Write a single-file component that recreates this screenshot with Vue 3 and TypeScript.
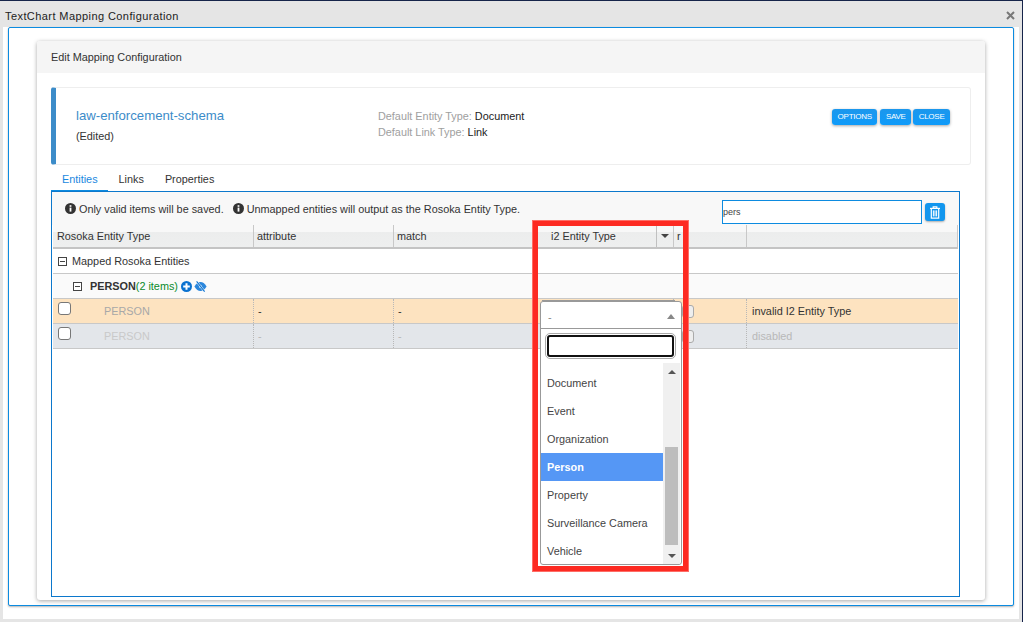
<script setup lang="ts">
interface EntityRow {
  name: string;
  attribute: string;
  match: string;
  status: string;
  tone: string;
}

interface ColumnDef {
  label: string;
  sortable?: boolean;
}

const columns: ColumnDef[] = [
  { label: 'Rosoka Entity Type' },
  { label: 'attribute' },
  { label: 'match' },
  { label: 'i2 Entity Type', sortable: true },
  { label: 'r' },
  { label: '' },
];

const rows: EntityRow[] = [
  { name: 'PERSON', attribute: '-', match: '-', status: 'invalid I2 Entity Type', tone: 'invalid' },
  { name: 'PERSON', attribute: '-', match: '-', status: 'disabled', tone: 'disabled' },
];

const options: string[] = ['Document', 'Event', 'Organization', 'Person', 'Property', 'Surveillance Camera', 'Vehicle'];
const tabs: string[] = ['Entities', 'Links', 'Properties'];
</script>

<template>
  <div class="window">
    <div class="titlebar">
      <span class="window-title">TextChart Mapping Configuration</span>
      <svg class="close-x" width="9" height="9" viewBox="0 0 9 9"><path d="M1 1l7 7M8 1l-7 7" stroke="#777" stroke-width="2" /></svg>
    </div>
    <div class="window-body">
      <div class="blue-panel">
        <div class="card">
          <div class="card-head">Edit Mapping Configuration</div>
          <div class="card-body">
            <div class="info-box">
              <div class="schema">
                <div class="schema-name">law-enforcement-schema</div>
                <div class="schema-state">(Edited)</div>
              </div>
              <div class="defaults">
                <div><span class="muted">Default Entity Type:</span> Document</div>
                <div><span class="muted">Default Link Type:</span> Link</div>
              </div>
              <div class="actions">
                <button class="btn">OPTIONS</button>
                <button class="btn">SAVE</button>
                <button class="btn">CLOSE</button>
              </div>
            </div>

            <div class="tabs">
              <div v-for="(tab, i) in tabs" :key="tab" class="tab" :class="{ 'tab--active': i === 0 }">{{ tab }}</div>
            </div>

            <div class="tab-panel">
              <div class="toolbar">
                <svg class="info-icon" width="11" height="11" viewBox="0 0 11 11"><circle cx="5.5" cy="5.5" r="5.5" fill="#333" /><rect x="4.6" y="4.6" width="1.8" height="4" fill="#fff" /><rect x="4.6" y="2.2" width="1.8" height="1.6" fill="#fff" /></svg>
                <span class="note">Only valid items will be saved.</span>
                <svg class="info-icon info-icon--second" width="11" height="11" viewBox="0 0 11 11"><circle cx="5.5" cy="5.5" r="5.5" fill="#333" /><rect x="4.6" y="4.6" width="1.8" height="4" fill="#fff" /><rect x="4.6" y="2.2" width="1.8" height="1.6" fill="#fff" /></svg>
                <span class="note">Unmapped entities will output as the Rosoka Entity Type.</span>
                <input class="search" value="pers" />
                <button class="trash">
                  <svg width="10" height="13" viewBox="0 0 10 13" fill="none" stroke="#fff" stroke-width="1.2"><path d="M0 2.4h10" /><path d="M3.2 2.2V0.8h3.6v1.4" /><path d="M1.3 2.6v9.6h7.4V2.6" /><path d="M3.4 4.4v6M5 4.4v6M6.6 4.4v6" stroke-width="1" /></svg>
                </button>
              </div>

              <div class="grid-head">
                <div v-for="col in columns" :key="col.label" class="head-cell" :class="{ 'head-cell--sort': col.sortable }">
                  <span class="head-label">{{ col.label }}</span>
                  <span v-if="col.sortable" class="sort-btn"><i class="caret-down"></i></span>
                </div>
              </div>

              <div class="group-row">
                <span class="toggle"></span>
                <span>Mapped Rosoka Entities</span>
              </div>
              <div class="group-row group-row--sub">
                <span class="toggle"></span>
                <b class="group-name">PERSON</b><span class="group-count">(2 items)</span>
                <svg class="mini-icon" width="11" height="11" viewBox="0 0 11 11"><circle cx="5.5" cy="5.5" r="5.5" fill="#0b72d0" /><path d="M5.5 2.2v6.6M2.2 5.5h6.6" stroke="#fff" stroke-width="2" /></svg>
                <svg class="mini-icon" width="13" height="11" viewBox="0 0 13 11"><path d="M0.4 5.5C2.3 2.3 4.2 1 6.5 1s4.2 1.3 6.1 4.5c-1.9 3.2-3.8 4.5-6.1 4.5S2.3 8.7.4 5.5z" fill="#2a86dc" /><circle cx="6.5" cy="5.5" r="1.5" fill="#cfe4f8" /><path d="M2.6 0.3l8 10.4" stroke="#fff" stroke-width="1.9" /><path d="M2.6 0.3l8 10.4" stroke="#0b72d0" stroke-width="1.1" /></svg>
              </div>

              <div v-for="row in rows" :key="row.status" class="data-row" :class="`data-row--${row.tone}`">
                <div class="cell cell--name"><span class="check"></span><span class="entity">{{ row.name }}</span></div>
                <div class="cell">{{ row.attribute }}</div>
                <div class="cell">{{ row.match }}</div>
                <div class="cell"></div>
                <div class="cell cell--flag"><span class="mini-check"></span></div>
                <div class="cell">{{ row.status }}</div>
              </div>
            </div>
          </div>
        </div>
      </div>
    </div>

    <div class="dropdown">
      <div class="dropdown-value">
        <span>-</span>
        <i class="caret-up"></i>
      </div>
      <div class="dropdown-search"><input class="dropdown-input" /></div>
      <div class="dropdown-list">
        <div class="options">
          <div v-for="opt in options" :key="opt" class="option" :class="{ 'option--on': opt === 'Person' }">{{ opt }}</div>
        </div>
        <div class="scrollbar">
          <i class="caret-up caret-up--small"></i>
          <div class="scroll-track"><div class="scroll-thumb"></div></div>
          <i class="caret-down caret-down--small"></i>
        </div>
      </div>
    </div>

    <div class="highlight"></div>
  </div>
</template>

<style>
html,
body {
  margin: 0;
  background: #e5e5e5;
}
</style>

<style scoped>
.window {
  position: relative;
  display: flex;
  flex-direction: column;
  width: 1023px;
  height: 622px;
  box-sizing: border-box;
  overflow: hidden;
  background: #e5e5e5;
  border-top: 1px solid #16244a;
  border-right: 1px solid #16244a;
  font-family: "Liberation Sans", Arial, sans-serif;
  font-size: 10.85px;
  color: #333;
}

.titlebar {
  display: flex;
  align-items: center;
  justify-content: space-between;
  box-sizing: border-box;
  height: 26px;
  padding: 3px 7px 0 5px;
  flex: none;
}

.window-title {
  font-size: 11px;
  letter-spacing: 0.42px;
  color: #222;
}

.window-body {
  flex: 1;
  min-height: 0;
  margin: 0 3px 3px 3px;
  padding: 0 5px 13px 5px;
  background: #fff;
  display: flex;
}

.blue-panel {
  flex: 1;
  box-sizing: border-box;
  padding: 13px 28px 5px 28px;
  border: 1px solid #0c8be0;
  border-radius: 2px;
  box-shadow: 0 1px 2px rgba(0, 0, 0, 0.3);
  background: #fff;
  display: flex;
}

.card {
  flex: 1;
  display: flex;
  flex-direction: column;
  border-radius: 3px;
  box-shadow: 0 1px 4px rgba(0, 0, 0, 0.35);
  background: #fff;
}

.card-head {
  height: 32px;
  line-height: 32px;
  padding-left: 14px;
  background: #f5f5f5;
  border-radius: 3px 3px 0 0;
  flex: none;
}

.card-body {
  flex: 1;
  min-height: 0;
  display: flex;
  flex-direction: column;
  padding: 14px 14px 3px 14px;
}

.info-box {
  display: flex;
  flex: none;
  box-sizing: border-box;
  height: 78px;
  border: 1px solid #eee;
  border-left: 5px solid #3c8cc9;
  border-radius: 3px;
}

.schema {
  width: 322px;
  padding: 20px 0 0 20px;
  box-sizing: border-box;
}

.schema-name {
  font-size: 13.2px;
  color: #3c8cc9;
}

.schema-state {
  margin-top: 7px;
}

.defaults {
  flex: 1;
  padding-top: 20px;
  line-height: 16px;
  color: #222;
}

.muted {
  color: #a0a0a0;
}

.actions {
  display: flex;
  align-items: flex-start;
  padding: 21px 20px 0 0;
}

.btn {
  height: 16px;
  margin-left: 3px;
  padding: 0 5.5px;
  border: 0;
  border-radius: 3px;
  background: linear-gradient(#1c97ec, #0f9bfa);
  box-shadow: 0 1px 3px rgba(0, 0, 0, 0.35);
  color: #fff;
  font-family: inherit;
  font-size: 8px;
  letter-spacing: -0.25px;
  line-height: 16px;
}

.btn:last-child {
  margin-left: 2px;
}

.tabs {
  display: flex;
  flex: none;
  height: 26px;
}

.tab {
  display: flex;
  align-items: center;
  padding: 2px 10.5px 0;
  color: #333;
}

.tab--active {
  color: #1a88e0;
  box-sizing: border-box;
  height: 26px;
  padding-left: 11px;
  border-bottom: 1px solid #0c8be0;
}

.tab-panel {
  flex: 1;
  min-height: 0;
  margin-right: 11px;
  border: 1px solid #0c78cc;
  padding: 0 1px;
}

.toolbar {
  display: flex;
  align-items: center;
  height: 33px;
  padding: 0 14px 0 13px;
  background: #f8f8f8;
  margin: 0 -1px;
}

.info-icon {
  margin-right: 3px;
  flex: none;
}

.info-icon--second {
  margin-left: 9px;
}

.search {
  box-sizing: border-box;
  width: 200px;
  height: 24px;
  margin: 7px 3px 0 auto;
  padding: 0;
  border: 1px solid #0c8be0;
  outline: 0;
  font-family: inherit;
  font-size: 9px;
  color: #444;
}

.trash {
  display: flex;
  align-items: center;
  justify-content: center;
  width: 20px;
  height: 18px;
  margin-top: 7px;
  padding: 0;
  border: 0;
  border-radius: 3px;
  background: #1296ee;
  box-shadow: 0 1px 2px rgba(0, 0, 0, 0.3);
}

.grid-head,
.data-row {
  display: grid;
  grid-template-columns: 201px 140px 143px 137px 73px 211px;
}

.grid-head {
  height: 24px;
  box-sizing: border-box;
  border-bottom: 2px solid #c4c4c4;
  background: linear-gradient(#f8f8f8 0, #f8f8f8 30%, #eceded 30%, #eeefef 100%);
}

.head-cell {
  display: flex;
  align-items: center;
  justify-content: space-between;
  overflow: hidden;
  padding-left: 3px;
  border-right: 1px solid #c8c8c8;
  white-space: nowrap;
}

.head-cell:first-child {
  padding-left: 4px;
}

.head-cell--sort {
  padding-left: 14px;
}

.sort-btn {
  display: flex;
  align-items: center;
  justify-content: center;
  width: 16px;
  height: 100%;
  border-left: 1px solid #c0c0c0;
}

.caret-down,
.caret-up {
  display: block;
  width: 0;
  height: 0;
  border-left: 4px solid transparent;
  border-right: 4px solid transparent;
}

.caret-down {
  border-top: 4px solid #444;
}

.caret-up {
  border-bottom: 5px solid #888;
}

.caret-up--small {
  border-bottom: 4px solid #555;
}

.caret-down--small {
  border-top-color: #555;
}

.group-row {
  display: flex;
  align-items: center;
  box-sizing: border-box;
  height: 25px;
  padding-left: 5px;
  border-bottom: 1px solid #c8c8c8;
}

.group-row--sub {
  padding-left: 20px;
  background: #fafafa;
}

.toggle {
  position: relative;
  box-sizing: border-box;
  width: 9px;
  height: 9px;
  margin-right: 5px;
  border: 1px solid #444;
  background: #fff;
}

.toggle::after {
  content: "";
  position: absolute;
  left: 1px;
  right: 1px;
  top: 3px;
  height: 1px;
  background: #444;
}

.group-row--sub .toggle {
  margin-right: 8px;
}

.group-name {
  color: #333;
}

.group-count {
  color: #0a8a2a;
  margin-right: 3px;
}

.mini-icon {
  margin-right: 2px;
}

.data-row {
  height: 25px;
  box-sizing: border-box;
  border-bottom: 1px solid #c8c8c8;
}

.data-row--invalid {
  background: #fde3c0;
}

.data-row--disabled {
  background: #e3e6ea;
  color: #b8b8b8;
}

.cell {
  display: flex;
  align-items: center;
  padding-left: 4px;
  border-right: 1px dotted #b8b8b8;
}

.cell:last-child {
  padding-left: 5px;
  border-right: 0;
}

.cell--name {
  position: relative;
  padding-left: 51px;
}

.check {
  position: absolute;
  left: 5px;
  top: 3px;
  box-sizing: border-box;
  width: 13px;
  height: 13px;
  background: #fff;
  border: 1px solid #777;
  border-radius: 3px;
}

.entity {
  color: #a8a8a8;
}

.data-row--disabled .entity {
  color: #c9c9c9;
}

.cell--flag {
  padding-left: 0;
}

.mini-check {
  margin-left: 8px;
  box-sizing: border-box;
  width: 12px;
  height: 13px;
  border: 1px solid #aaa;
  border-radius: 3px;
  background: #eee;
}

.dropdown {
  position: absolute;
  left: 540px;
  top: 300px;
  box-sizing: border-box;
  width: 142px;
  height: 264px;
  display: flex;
  flex-direction: column;
  background: #fff;
  border: 1px solid #999;
  border-radius: 3px;
}

.dropdown::before {
  content: "";
  position: absolute;
  left: 1px;
  top: -2px;
  width: 133px;
  height: 1px;
  background: #999;
}

.dropdown-value {
  display: flex;
  align-items: center;
  justify-content: space-between;
  flex: none;
  box-sizing: border-box;
  height: 27px;
  padding: 3px 6px 0 7px;
  border-bottom: 1px solid #999;
  color: #888;
}

.dropdown-search {
  flex: none;
  box-sizing: border-box;
  height: 34px;
  padding: 4px 4px 0 4px;
}

.dropdown-input {
  display: block;
  box-sizing: border-box;
  width: 127px;
  height: 22px;
  margin: 2px;
  padding: 0;
  border: 2px solid #111;
  border-radius: 3px;
  outline: 1px solid #aaa;
  outline-offset: 1px;
}

.dropdown-list {
  flex: 1;
  min-height: 0;
  display: flex;
  overflow: hidden;
}

.options {
  flex: 1;
  padding-top: 6px;
}

.option {
  height: 28px;
  line-height: 28px;
  padding-left: 6px;
  color: #444;
  white-space: nowrap;
}

.option--on {
  background: #5597f5;
  color: #fff;
  font-weight: 700;
}

.scrollbar {
  display: flex;
  flex-direction: column;
  align-items: center;
  width: 17px;
  flex: none;
  margin-right: 1px;
  padding: 7px 0 6px;
  background: #f0f0f0;
  box-sizing: border-box;
}

.scroll-track {
  flex: 1;
  width: 13px;
  padding-top: 73px;
  box-sizing: border-box;
}

.scroll-thumb {
  height: 98px;
  background: #bdbdbd;
}

.highlight {
  position: absolute;
  left: 533px;
  top: 220px;
  box-sizing: border-box;
  width: 155px;
  height: 350px;
  border: 5px solid #fd2a22;
  box-shadow: 0 0 0 1px #fe6d66;
}
</style>
